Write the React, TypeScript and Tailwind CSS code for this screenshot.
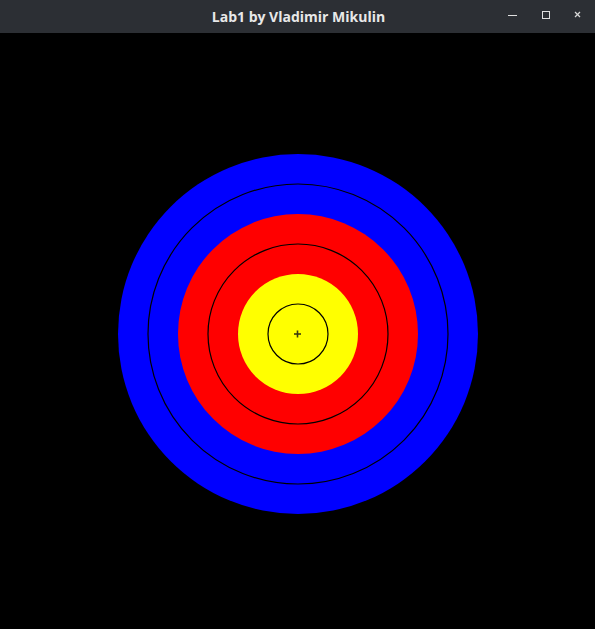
export default function App() {
  return (
    <div className="w-[595px] h-[629px] flex flex-col bg-black overflow-hidden">
      <div className="h-[33px] bg-[#2c2f34] flex items-center relative shrink-0">
        <div className="flex-1 text-center text-[14px] font-bold text-[#e8e8e8] font-['Open_Sans',sans-serif] pl-[2px]">
          Lab1 by Vladimir Mikulin
        </div>
        <div className="absolute right-0 top-0 h-[33px] flex items-center">
          <svg width="115" height="33" viewBox="0 0 115 33">
            <line x1="28" y1="15.5" x2="37" y2="15.5" stroke="#e0e0e0" strokeWidth="1" />
            <rect x="62.5" y="11.5" width="7" height="7" fill="none" stroke="#e0e0e0" strokeWidth="1" />
            <line x1="95" y1="12" x2="100" y2="17" stroke="#d8d8d8" strokeWidth="1.2" />
            <line x1="100" y1="12" x2="95" y2="17" stroke="#d8d8d8" strokeWidth="1.2" />
          </svg>
        </div>
      </div>
      <div className="flex-1 bg-black">
        <svg width="595" height="596" viewBox="0 0 595 596">
          <circle cx="298" cy="301" r="180" fill="#0000ff" />
          <circle cx="298" cy="301" r="150" fill="none" stroke="#000" strokeWidth="1.2" />
          <circle cx="298" cy="301" r="120" fill="#ff0000" />
          <circle cx="298" cy="301" r="90" fill="none" stroke="#000" strokeWidth="1.2" />
          <circle cx="298" cy="301" r="60" fill="#ffff00" />
          <circle cx="298" cy="301" r="30" fill="none" stroke="#000" strokeWidth="1.2" />
          <line x1="294" y1="301" x2="301" y2="301" stroke="#3a3a10" strokeWidth="1.6" />
          <line x1="297.5" y1="297.5" x2="297.5" y2="304.5" stroke="#3a3a10" strokeWidth="1.6" />
        </svg>
      </div>
    </div>
  );
}
